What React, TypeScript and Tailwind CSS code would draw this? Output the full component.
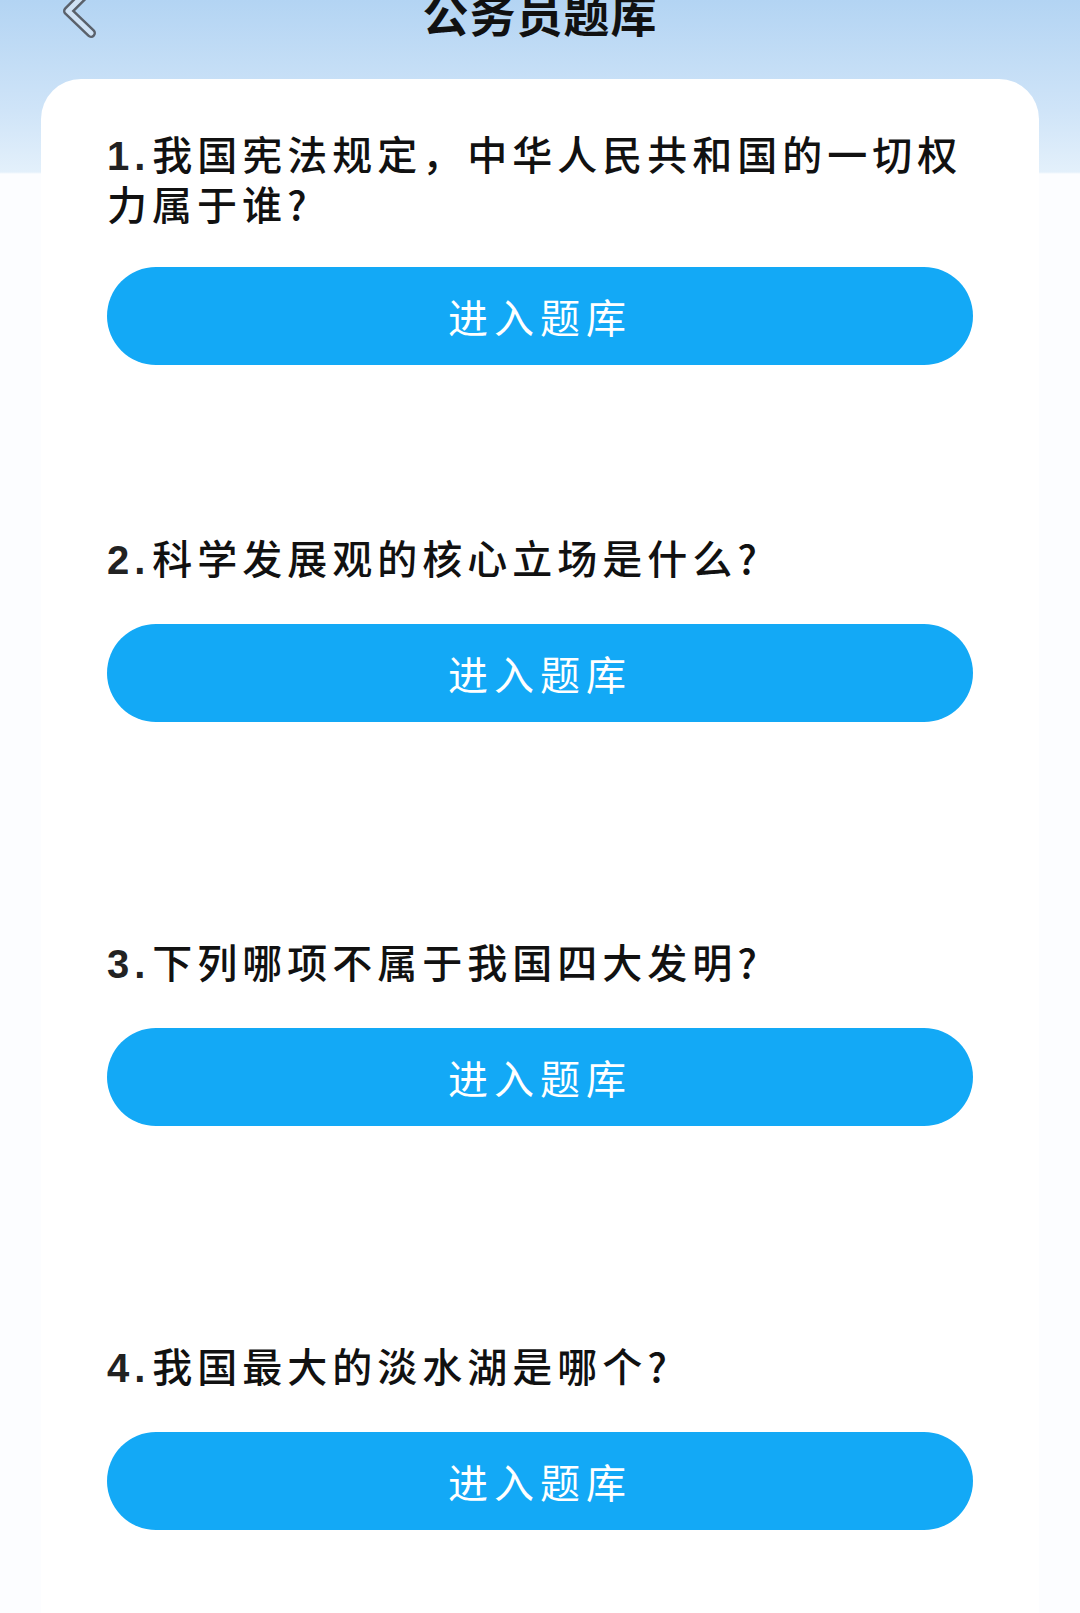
import React from 'react';

const questions = [
  { no: '1.', text: '我国宪法规定，中华人民共和国的一切权力属于谁?' },
  { no: '2.', text: '科学发展观的核心立场是什么?' },
  { no: '3.', text: '下列哪项不属于我国四大发明?' },
  { no: '4.', text: '我国最大的淡水湖是哪个?' },
];

const BackIcon = () => (
  <svg width="44" height="52" viewBox="0 0 44 52" className="block">
    <path d="M30 5 L10 25 L33 47" fill="none" stroke="#5a616b" strokeWidth="10" strokeLinecap="round" strokeLinejoin="round" />
    <path d="M30 5 L10 25 L33 47" fill="none" stroke="#cfe2f5" strokeWidth="5" strokeLinecap="round" strokeLinejoin="round" />
  </svg>
);

const App: React.FC = () => {
  return (
    <div className="min-h-[1613px] w-full overflow-hidden bg-[linear-gradient(180deg,#b3d4f3_0px,#cfe4f8_110px,#e3f0fb_172px,#fcfdff_174px)] font-['Noto_Sans_CJK_SC',sans-serif]">
      {/* header, scrolled slightly off the top */}
      <div className="h-[79px] flex flex-col">
        <div className="grid grid-cols-[1fr_auto_1fr] items-center -mt-[16px] h-[56px]">
          <div className="pl-[58px]">
            <BackIcon />
          </div>
          <h1 className="text-[46px] leading-[56px] font-bold text-[#111] tracking-[1px]">公务员题库</h1>
          <div />
        </div>
      </div>

      <div className="mx-[41px] rounded-t-[40px] bg-white px-[66px] pt-[51px] min-h-[1534px]">
        {questions.map((q, i) => (
          <div key={i} className="h-[404px]">
            <p className="text-[40px] leading-[47px] tracking-[5px] font-medium text-[#111]">
              <span className="font-['Liberation_Sans',sans-serif] font-bold text-[#222] mr-[2px]">{q.no}</span>
              {q.text}
            </p>
            <button className="mt-[40px] w-full h-[98px] rounded-full bg-[#13a9f6] text-white text-[40px] tracking-[6px] font-normal flex items-center justify-center">
              进入题库
            </button>
          </div>
        ))}
      </div>
    </div>
  );
};

export default App;
